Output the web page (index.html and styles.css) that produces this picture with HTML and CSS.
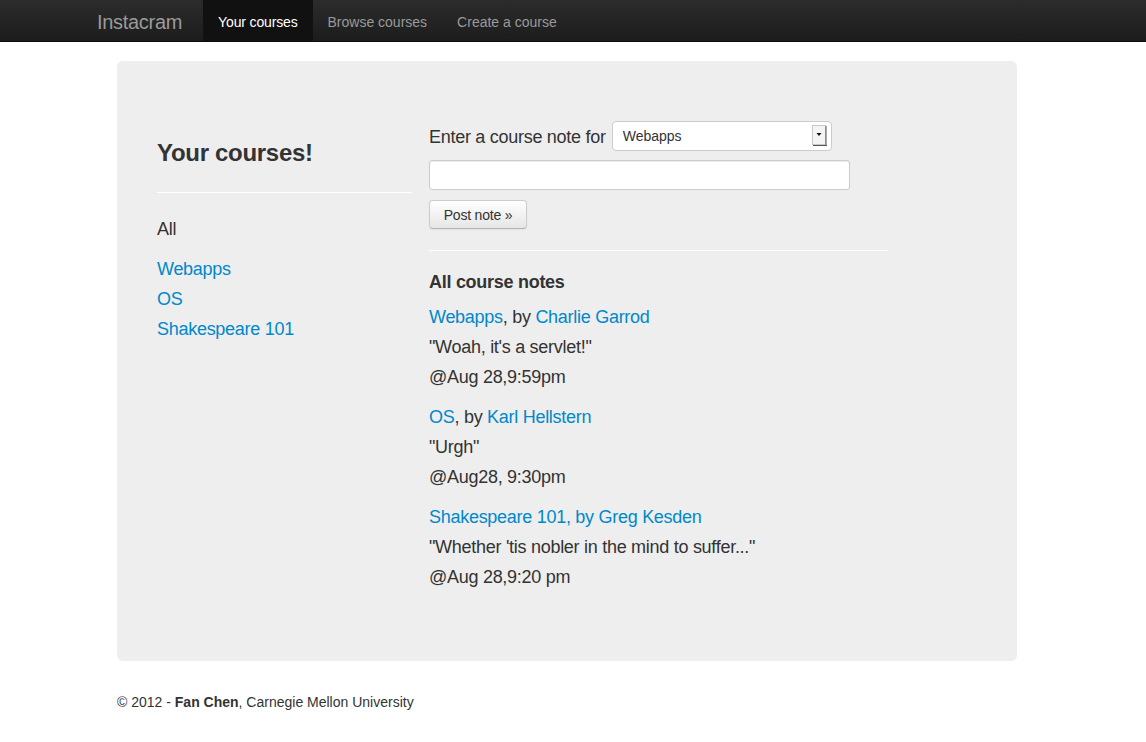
FILE: index.html
```html
<!DOCTYPE html>
<html>
<head>
<meta charset="utf-8">
<title>Instacram</title>
<link rel="stylesheet" href="styles.css">
</head>
<body>
<div class="navbar">
  <div class="nav-container">
    <a class="brand" href="#">Instacram</a>
    <ul class="nav">
      <li class="active"><a href="#">Your courses</a></li>
      <li><a href="#">Browse courses</a></li>
      <li><a href="#">Create a course</a></li>
    </ul>
  </div>
</div>

<div class="page">
  <div class="hero">
    <div class="sidebar">
      <h2 class="title">Your courses!</h2>
      <hr class="rule">
      <div class="course-all">All</div>
      <ul class="course-list">
        <li><a href="#">Webapps</a></li>
        <li><a href="#">OS</a></li>
        <li><a href="#">Shakespeare 101</a></li>
      </ul>
    </div>
    <div class="main">
      <form class="note-form">
        <div class="form-row">
          <label class="form-label">Enter a course note for</label>
          <span class="select-wrap">
            <select class="select">
              <option>Webapps</option>
              <option>OS</option>
              <option>Shakespeare 101</option>
            </select>
            <span class="select-arrow">
              <svg width="15" height="21" viewBox="0 0 15 21">
                <rect x="0.5" y="0.5" width="13" height="19" fill="#f4f4f4" stroke="#c8c8c8"/>
                <line x1="14" y1="1" x2="14" y2="21" stroke="#555"/>
                <line x1="1" y1="20.5" x2="15" y2="20.5" stroke="#555"/>
                <path d="M4.5 8 L9.5 8 L7 11 Z" fill="#111"/>
              </svg>
            </span>
          </span>
        </div>
        <input class="text-input" type="text">
        <button class="btn" type="button">Post note »</button>
      </form>
      <hr class="rule rule-wide">
      <h3 class="notes-title">All course notes</h3>
      <div class="note">
        <div><a href="#">Webapps</a>, by <a href="#">Charlie Garrod</a></div>
        <div>"Woah, it's a servlet!"</div>
        <div>@Aug 28,9:59pm</div>
      </div>
      <div class="note">
        <div><a href="#">OS</a>, by <a href="#">Karl Hellstern</a></div>
        <div>"Urgh"</div>
        <div>@Aug28, 9:30pm</div>
      </div>
      <div class="note">
        <div><a href="#">Shakespeare 101, by Greg Kesden</a></div>
        <div>"Whether 'tis nobler in the mind to suffer..."</div>
        <div>@Aug 28,9:20 pm</div>
      </div>
    </div>
  </div>
  <footer class="footer">© 2012 - <b>Fan Chen</b>, Carnegie Mellon University</footer>
</div>
</body>
</html>
```

FILE: styles.css
```css
* { box-sizing: border-box; }
html, body { margin: 0; padding: 0; }
body {
  font-family: "Liberation Sans", Arial, Helvetica, sans-serif;
  font-size: 14px;
  line-height: 20px;
  color: #333;
  background: #fff;
  padding-right: 12px;
}
a { color: #0088cc; text-decoration: none; }

.navbar {
  height: 42px;
  background: linear-gradient(to bottom, #2c2c2c, #1c1c1c);
  border-bottom: 1px solid #0c0c0c;
  margin-right: -12px;
  padding-right: 12px;
}
.nav-container {
  width: 940px;
  margin: 0 auto;
  display: flex;
  align-items: stretch;
  height: 41px;
}
.brand {
  font-size: 20px;
  color: #9a9a9a;
  line-height: 38px;
  padding-top: 3px;
  margin-right: 21px;
  letter-spacing: -0.3px;
}
.nav {
  list-style: none;
  margin: 0;
  padding: 0;
  display: flex;
}
.nav li a {
  display: block;
  padding: 3px 15px 0;
  line-height: 38px;
  color: #9a9a9a;
  font-size: 14px;
  letter-spacing: 0;
}
.nav li.active a {
  color: #fff;
  background: #111;
  letter-spacing: -0.15px;
}

.page {
  width: 940px;
  margin: 0 auto;
  padding: 0 20px;
}
.hero {
  margin-top: 19px;
  background: #eeeeee;
  border-radius: 6px;
  padding: 61px 40px 59px;
  display: flex;
  gap: 17px;
  font-size: 18px;
  line-height: 30px;
  letter-spacing: -0.28px;
}
.sidebar { width: 255px; flex: none; }
.main { width: 459px; flex: none; }

.title {
  font-size: 24px;
  line-height: 40px;
  font-weight: bold;
  margin: 11px 0 0;
  color: #333;
  letter-spacing: -0.3px;
}
.rule {
  border: 0;
  border-top: 1px solid #eee;
  border-bottom: 1px solid #fff;
  margin: 18px 0 21px;
  height: 0;
}
.course-all { margin-bottom: 10px; color: #333; }
.course-list { list-style: none; margin: 0; padding: 0; }

.note-form { display: flex; flex-direction: column; align-items: flex-start; margin-top: -1px; }
.form-row {
  display: flex;
  align-items: center;
  height: 30px;
}
.form-label { margin-right: 6px; color: #333; padding-top: 2px; }
.select-wrap { position: relative; display: inline-block; }
.select {
  -webkit-appearance: none;
  appearance: none;
  width: 220px;
  height: 30px;
  border: 1px solid #ccc;
  border-radius: 4px;
  background: #fff;
  font-family: "Liberation Sans", Arial, sans-serif;
  font-size: 14px;
  color: #333;
  padding: 0 10px;
  display: block;
  letter-spacing: 0;
}
.select-arrow {
  position: absolute;
  right: 5px;
  top: 4px;
  width: 15px;
  height: 21px;
  pointer-events: none;
}
.select-arrow svg { display: block; }
.text-input {
  margin-top: 9px;
  width: 421px;
  height: 30px;
  border: 1px solid #ccc;
  border-radius: 3px;
  background: #fff;
  box-shadow: inset 0 1px 1px rgba(0,0,0,0.075);
}
.btn {
  margin-top: 10px;
  height: 29px;
  padding: 0;
  width: 98px;
  white-space: nowrap;
  font-family: "Liberation Sans", Arial, sans-serif;
  font-size: 14px;
  letter-spacing: -0.2px;
  color: #333;
  background: linear-gradient(to bottom, #ffffff, #e6e6e6);
  border: 1px solid #ccc;
  border-bottom-color: #b3b3b3;
  border-radius: 4px;
  box-shadow: inset 0 1px 0 rgba(255,255,255,0.2), 0 1px 2px rgba(0,0,0,0.05);
}
.rule-wide { margin: 20px 0 16px; }
.notes-title {
  font-size: 18px;
  line-height: 30px;
  font-weight: bold;
  margin: 0 0 5px;
  color: #333;
}
.note { margin-bottom: 10px; }

.footer {
  margin-top: 31px;
  font-size: 14px;
  line-height: 20px;
  color: #333;
}
.footer b { color: #333; }
```
